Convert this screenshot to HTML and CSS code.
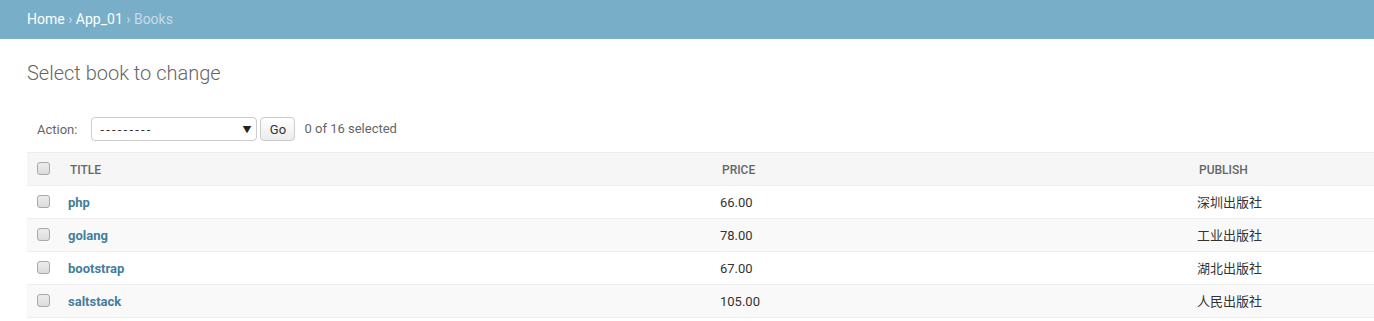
FILE: index.html
```html
<!DOCTYPE html>
<html lang="en">
<head>
    <meta charset="UTF-8">
    <title>Select book to change</title>
    <link rel="stylesheet" href="styles.css">
</head>
<body>
    <div class="breadcrumbs">
        <a href="#">Home</a> &rsaquo; <a href="#">App_01</a> &rsaquo; Books
    </div>

    <div class="content">
        <h1>Select book to change</h1>

        <div class="actions">
            <label class="action-label">Action:</label>
            <div class="select-wrap">
                <select class="action-select">
                    <option>---------</option>
                </select>
                <span class="select-arrow">&#9660;</span>
            </div>
            <button class="go-button">Go</button>
            <span class="action-counter">0 of 16 selected</span>
        </div>

        <table class="result-list">
            <colgroup>
                <col class="col-check">
                <col class="col-title">
                <col class="col-price">
                <col>
            </colgroup>
            <thead>
                <tr>
                    <th class="check-cell"><input type="checkbox"></th>
                    <th>Title</th>
                    <th>Price</th>
                    <th>Publish</th>
                </tr>
            </thead>
            <tbody>
                <tr class="row1">
                    <td class="check-cell"><input type="checkbox"></td>
                    <td><a href="#">php</a></td>
                    <td>66.00</td>
                    <td>深圳出版社</td>
                </tr>
                <tr class="row2">
                    <td class="check-cell"><input type="checkbox"></td>
                    <td><a href="#">golang</a></td>
                    <td>78.00</td>
                    <td>工业出版社</td>
                </tr>
                <tr class="row1">
                    <td class="check-cell"><input type="checkbox"></td>
                    <td><a href="#">bootstrap</a></td>
                    <td>67.00</td>
                    <td>湖北出版社</td>
                </tr>
                <tr class="row2">
                    <td class="check-cell"><input type="checkbox"></td>
                    <td><a href="#">saltstack</a></td>
                    <td>105.00</td>
                    <td>人民出版社</td>
                </tr>
            </tbody>
        </table>
    </div>
</body>
</html>
```

FILE: styles.css
```css
body {
    margin: 0;
    font-family: Roboto, "Noto Sans CJK SC", sans-serif;
    font-size: 14px;
    color: #333;
    background: #fff;
}

a {
    text-decoration: none;
}

.breadcrumbs {
    background: #79aec8;
    padding: 10px 27px;
    line-height: 19px;
    font-size: 14px;
    color: #c4dce8;
}

.breadcrumbs a {
    color: #fff;
}

.content {
    padding: 20px 0 0 27px;
}

h1 {
    margin: 0;
    font-size: 20px;
    font-weight: 300;
    line-height: 28px;
    color: #666;
}

.actions {
    display: flex;
    align-items: center;
    margin-top: 20px;
    padding: 10px 10px 11px;
    font-size: 13px;
    color: #666;
}

.action-label {
    margin-right: 14px;
}

.select-wrap {
    position: relative;
}

.action-select {
    appearance: none;
    -webkit-appearance: none;
    width: 166px;
    height: 24px;
    padding: 0 8px;
    border: 1px solid #ccc;
    border-radius: 4px;
    background: #fff;
    font-family: Roboto, sans-serif;
    font-size: 13px;
    letter-spacing: 2.2px;
    color: #333;
}

.select-arrow {
    position: absolute;
    right: 6px;
    top: 6px;
    font-size: 9px;
    color: #222;
    pointer-events: none;
}

.go-button {
    margin-left: 3px;
    width: 35px;
    height: 24px;
    padding: 0;
    border: 1px solid #ccc;
    border-radius: 4px;
    background: linear-gradient(#fff, #ececec);
    font-family: Roboto, sans-serif;
    font-size: 13px;
    color: #333;
}

.action-counter {
    margin-left: 9px;
    margin-top: -2px;
}

.result-list {
    width: 100%;
    table-layout: fixed;
    border-collapse: collapse;
    border-top: 1px solid #eee;
    font-size: 13px;
}

.col-check {
    width: 33px;
}

.col-title {
    width: 652px;
}

.col-price {
    width: 477px;
}

.result-list th {
    background: #f6f6f6;
    padding: 9px 10px 7px;
    line-height: 16px;
    font-size: 12px;
    font-weight: 500;
    text-transform: uppercase;
    text-align: left;
    color: #666;
    border-bottom: 1px solid #eee;
}

.result-list td {
    padding: 9px 8px 7px;
    line-height: 16px;
    border-bottom: 1px solid #eee;
}

.result-list .check-cell {
    padding: 8px 0 8px 10px;
}

.check-cell input {
    appearance: none;
    -webkit-appearance: none;
    display: block;
    margin: 0 0 2px;
    width: 13px;
    height: 13px;
    border: 1px solid #a9a9a9;
    border-radius: 3px;
    background: linear-gradient(#ececec, #dcdcdc);
}

.result-list td a {
    color: #447e9b;
    font-weight: bold;
}

.row1 {
    background: #fff;
}

.row2 {
    background: #f9f9f9;
}
```
